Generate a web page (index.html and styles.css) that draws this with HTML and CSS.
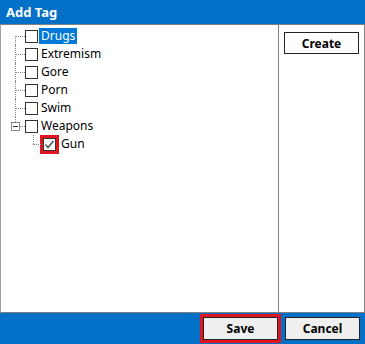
FILE: index.html
```html
<!DOCTYPE html>
<html lang="en">
<head>
<meta charset="UTF-8">
<meta name="viewport" content="width=device-width, initial-scale=1.0">
<title>Add Tag</title>
<link rel="stylesheet" href="styles.css">
</head>
<body>

<div class="dialog">
  <div class="titlebar">Add Tag</div>

  <div class="main">
    <div class="tree">
      <div class="node first"><span class="box"></span><span class="label selected">Drugs</span></div>
      <div class="node"><span class="box"></span><span class="label">Extremism</span></div>
      <div class="node"><span class="box"></span><span class="label">Gore</span></div>
      <div class="node"><span class="box"></span><span class="label">Porn</span></div>
      <div class="node"><span class="box"></span><span class="label">Swim</span></div>
      <div class="node last">
        <span class="expander"></span>
        <span class="box"></span><span class="label">Weapons</span>
      </div>
      <div class="node child">
        <span class="box checked">
          <svg width="11" height="11" viewBox="0 0 11 11"><polyline points="1.5,5.5 4,8.5 9.5,2" fill="none" stroke="#555" stroke-width="1.6"/></svg>
        </span><span class="label">Gun</span>
      </div>
    </div>
    <div class="side">
      <button class="btn create">Create</button>
    </div>
  </div>

  <div class="footer">
    <button class="btn save">Save</button>
    <button class="btn">Cancel</button>
  </div>
</div>

</body>
</html>
```

FILE: styles.css
```css
body { margin: 0; padding: 0; background: #fff; font-family: "Noto Sans", "Open Sans", sans-serif; font-size: 12px; color: #000; }
.dialog { width: 365px; height: 344px; display: flex; flex-direction: column; }

.titlebar { height: 24px; background: #0170c6; color: #fff; font-weight: bold; font-size: 13px; line-height: 24px; padding-left: 6px; }

.main { height: 287px; display: flex; border-top: 1px solid #808080; border-bottom: 1px solid #808080; border-left: 1px solid #a0a0a0; }
.tree { width: 277px; border-right: 1px solid #808080; padding-top: 2px; }
.side { flex: 1; border-right: 1px solid #808080; padding: 7px 0 0 5px; }

/* tree rows */
.node { position: relative; height: 18px; display: flex; align-items: center; padding-left: 24px; }
.node::before { content: ""; position: absolute; left: 14px; top: 9px; width: 10px; border-top: 1px dotted #8a8a8a; }
.node::after { content: ""; position: absolute; left: 14px; top: 0; bottom: 0; border-left: 1px dotted #8a8a8a; }
.node.first::after { top: 9px; }
.node.last::after { bottom: 9px; }
.node.child { padding-left: 42px; }
.node.child::before { left: 32px; width: 10px; }
.node.child::after { left: 32px; top: 0; bottom: 9px; }

.expander { position: absolute; left: 10px; top: 5px; width: 7px; height: 7px; border: 1px solid #8a8a8a; background: #fff; z-index: 1; }
.expander::after { content: ""; position: absolute; left: 1px; top: 3px; width: 5px; border-top: 1px solid #333; }

.box { width: 11px; height: 11px; border: 1px solid #333; background: #fff; flex: none; display: flex; align-items: center; justify-content: center; }
.box.checked { outline: 3px solid #e0151f; }
.label { padding: 1px 2px; margin-left: 1px; line-height: 14px; }
.label.selected { background: #0078d7; color: #fff; }
.node.child .label { margin-left: 3px; }

/* buttons */
.btn { font-family: "Noto Sans", "Open Sans", sans-serif; font-size: 12px; font-weight: bold; color: #000; border: 1px solid #222; padding: 0; height: 23px; background: #efefef; }
.create { width: 75px; height: 22px; background: #fff; }

.footer { flex: 1; background: #0170c6; display: flex; justify-content: flex-end; align-items: center; gap: 7px; padding-right: 5px; }
.footer .btn { width: 75px; }
.save { outline: 3px solid #e0151f; }
```
